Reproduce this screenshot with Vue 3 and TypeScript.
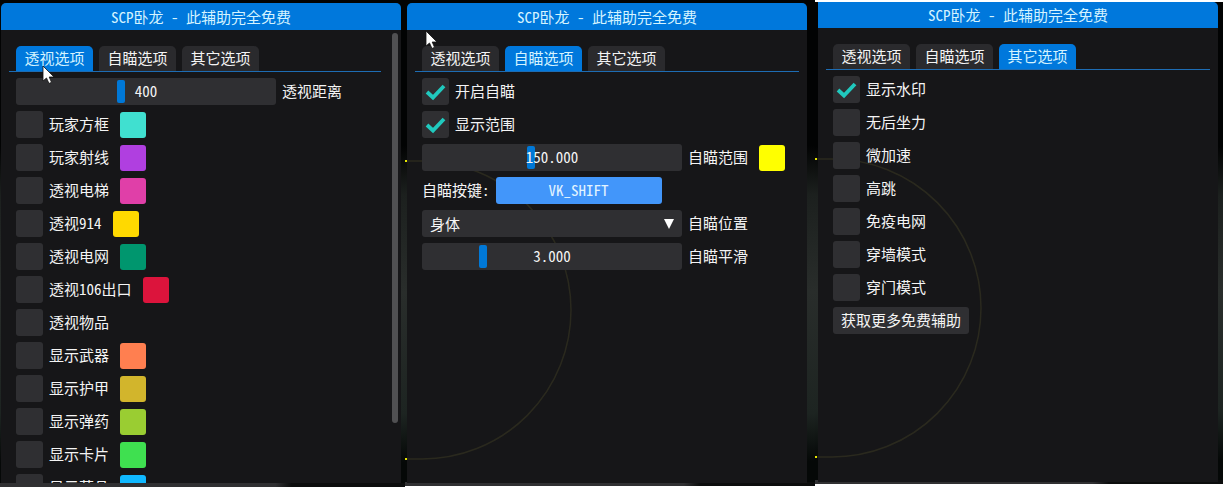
<script setup lang="ts">
interface Option {
  label: string
  color?: string
  checked?: boolean
}

const title = 'SCP卧龙 - 此辅助完全免费'
const tabs = ['透视选项', '自瞄选项', '其它选项']

const visuals: Option[] = [
  { label: '玩家方框', color: '#40e0d0' },
  { label: '玩家射线', color: '#b03fe0' },
  { label: '透视电梯', color: '#e03fa8' },
  { label: '透视914', color: '#ffd900' },
  { label: '透视电网', color: '#00966e' },
  { label: '透视106出口', color: '#dc143c' },
  { label: '透视物品' },
  { label: '显示武器', color: '#ff7f50' },
  { label: '显示护甲', color: '#d2b52c' },
  { label: '显示弹药', color: '#9acd32' },
  { label: '显示卡片', color: '#3fe050' },
  { label: '显示药品', color: '#10b8ff' },
]

const aim: Option[] = [
  { label: '开启自瞄', checked: true },
  { label: '显示范围', checked: true },
]

const misc: Option[] = [
  { label: '显示水印', checked: true },
  { label: '无后坐力' },
  { label: '微加速' },
  { label: '高跳' },
  { label: '免疫电网' },
  { label: '穿墙模式' },
  { label: '穿门模式' },
]

const panels = [
  { id: 'visual', active: 0, options: visuals },
  { id: 'aim', active: 1, options: aim },
  { id: 'misc', active: 2, options: misc },
]
</script>

<template>
  <main class="stage">
    <section v-for="p in panels" :key="p.id" class="scene" :class="p.id">
      <div class="window">
        <svg v-if="p.id !== 'visual'" class="range" width="170" height="304" viewBox="0 0 170 304" fill="none" aria-hidden="true">
          <path d="M2 3H17A149 149 0 0 1 17 301H2" stroke="#6b6a32" stroke-opacity=".24" stroke-width="1.5" />
          <path d="M0 3H2M0 301H2" stroke="#e6e600" stroke-width="2" />
        </svg>
        <h1 class="title">{{ title }}</h1>
        <div class="body">
          <nav class="tabs" role="tablist">
            <button v-for="(t, i) in tabs" :key="t" type="button" role="tab" class="tab" :class="{ on: i === p.active }" :aria-selected="i === p.active">{{ t }}</button>
          </nav>
          <div class="rows">
            <div v-if="p.id === 'visual'" class="row">
              <input id="distance" class="slider" type="range" min="0" max="1000" value="400" />
              <output class="value" for="distance">400</output>
              <label for="distance">透视距离</label>
            </div>
            <div v-for="(o, i) in p.options" :key="o.label" class="row">
              <input :id="p.id + i" class="check" type="checkbox" :checked="o.checked" />
              <svg class="mark" width="27" height="27" viewBox="0 0 27 27" fill="none" aria-hidden="true">
                <path d="M5 14L11 19.500L22 8" stroke="#20c9be" stroke-width="3.800" />
              </svg>
              <label :for="p.id + i">{{ o.label }}</label>
              <button v-if="o.color" type="button" class="swatch" :style="{ background: o.color }" :aria-label="o.label"></button>
            </div>
            <template v-if="p.id === 'aim'">
              <div class="row">
                <input id="range" class="slider" type="range" min="0" max="360" value="150" />
                <output class="value" for="range">150.000</output>
                <label for="range">自瞄范围</label>
                <button type="button" class="swatch yellow" aria-label="自瞄范围"></button>
              </div>
              <div class="row">
                <label for="key">自瞄按键:</label>
                <button id="key" type="button" class="key">VK_SHIFT</button>
              </div>
              <div class="row">
                <select id="part" class="combo"><option>身体</option></select>
                <svg class="arrow" width="12" height="10" viewBox="0 0 12 10" aria-hidden="true"><path d="M1 0H11L6 10Z" fill="#fff" /></svg>
                <label for="part">自瞄位置</label>
              </div>
              <div class="row">
                <input id="smooth" class="slider" type="range" min="1" max="10" step=".1" value="3" />
                <output class="value" for="smooth">3.000</output>
                <label for="smooth">自瞄平滑</label>
              </div>
            </template>
            <button v-if="p.id === 'misc'" type="button" class="more">获取更多免费辅助</button>
          </div>
          <div v-if="p.id === 'visual'" class="scrollbar"></div>
        </div>
      </div>
      <svg v-if="p.id !== 'misc'" class="cursor" width="14" height="20" viewBox="0 0 14 20" aria-hidden="true">
        <path d="M1 1V16L4.500 13L7 18.500L9.500 17.300L7.200 12H12Z" fill="#fff" stroke="#111" stroke-width=".8" />
      </svg>
    </section>
  </main>
</template>

<style>
body { margin: 0; background: #fff; }
</style>

<style scoped>
.stage {
  display: grid;
  grid-template-columns: 405fr 410fr 408fr;
  height: 100vh;
  overflow: hidden;
  font-family: "Noto Sans Mono CJK SC", "Noto Sans CJK SC", sans-serif;
  font-size: 15px;
  line-height: 27px;
  color: #f4f4f4;
}
.stage * { box-sizing: border-box; }
.scene {
  position: relative;
  display: flex;
  min-width: 0;
  padding: 3px 4px 4px 1px;
  overflow: hidden;
  background:
    linear-gradient(90deg, #303032 0 68%, #0c0d0d 72%) bottom / 100% 4px no-repeat,
    linear-gradient(#020303 0 30%, #1c201e 40%, #292d2b 60%, #1d2421 85%, #050807 95%);
}
.aim { padding: 3px 8px 3px 2px; margin-bottom: 1px; }
.misc { padding: 0 5px 2px 3px; margin: 2px 0 3px; }
.window {
  display: flex;
  flex-direction: column;
  flex: 1;
  min-width: 0;
  overflow: hidden;
  background: #161618;
  border-radius: 5px 5px 0 0;
}
.misc .window { border-radius: 0 5px 0 0; }
.title {
  position: relative;
  flex: none;
  margin: 0;
  background: #0078dc;
  color: #d4f3ff;
  font-size: 15px;
  font-weight: 400;
  text-align: center;
}
.misc .title { line-height: 26px; }
.body {
  position: relative;
  flex: 1;
  min-height: 0;
  padding: 16px 20px 0 8px;
}
.aim .body, .misc .body { padding-right: 8px; }
.tabs {
  display: flex;
  gap: 6px;
  padding: 0 7px;
  border-bottom: 1px solid #1d6cb3;
}
button, select { font: inherit; color: inherit; border: 0; margin: 0; }
.tab {
  min-width: 77px;
  height: 25px;
  padding: 0 8px 2px;
  line-height: 23px;
  background: #2a2a2d;
  border-radius: 5px 5px 0 0;
}
.tab.on { background: #0078dc; color: #d4f3ff; }
.rows {
  display: flex;
  flex-direction: column;
  align-items: flex-start;
  gap: 6px;
  padding: 6px 7px 0;
}
.row {
  position: relative;
  display: flex;
  align-items: center;
  gap: 6px;
  width: 100%;
  height: 27px;
  white-space: nowrap;
}
.row label, .value { padding-bottom: 2px; }
.check {
  appearance: none;
  flex: none;
  width: 27px;
  height: 27px;
  margin: 0;
  background: #2f2f32;
  border-radius: 3px;
}
.mark { position: absolute; left: 0; visibility: hidden; }
.check:checked + .mark { visibility: visible; }
.swatch {
  width: 26px;
  height: 26px;
  margin-left: 5px;
  padding: 0;
  border-radius: 3px;
}
.yellow { background: #ff0; }
.slider {
  appearance: none;
  width: 260px;
  height: 27px;
  margin: 0;
  padding: 0 2px;
  background: #2f2f32;
  border-radius: 3px;
}
.slider::-webkit-slider-thumb {
  appearance: none;
  width: 8px;
  height: 23px;
  background: #0078d7;
  border-radius: 2px;
}
.value {
  position: absolute;
  left: 0;
  width: 260px;
  text-align: center;
  pointer-events: none;
}
.combo {
  appearance: none;
  width: 260px;
  height: 27px;
  padding: 0 8px 2px;
  background: #2f2f32;
  border-radius: 3px;
}
.arrow { position: absolute; left: 241px; }
.key {
  width: 166px;
  height: 27px;
  padding: 0 0 2px;
  line-height: 25px;
  background: #4296fa;
  color: #e2f4ff;
  border-radius: 3px;
}
.more {
  height: 27px;
  padding: 0 8px 2px;
  line-height: 25px;
  background: #2f2f32;
  border-radius: 3px;
}
.scrollbar {
  position: absolute;
  top: 3px;
  right: 3px;
  width: 6px;
  height: 390px;
  background: #505052;
  border-radius: 3px;
}
.cursor { position: absolute; left: 42px; top: 65px; }
.aim .cursor { left: 20px; top: 30px; }
.range { position: absolute; left: 0; top: 158px; pointer-events: none; }
.misc .range { top: 154px; }
</style>
